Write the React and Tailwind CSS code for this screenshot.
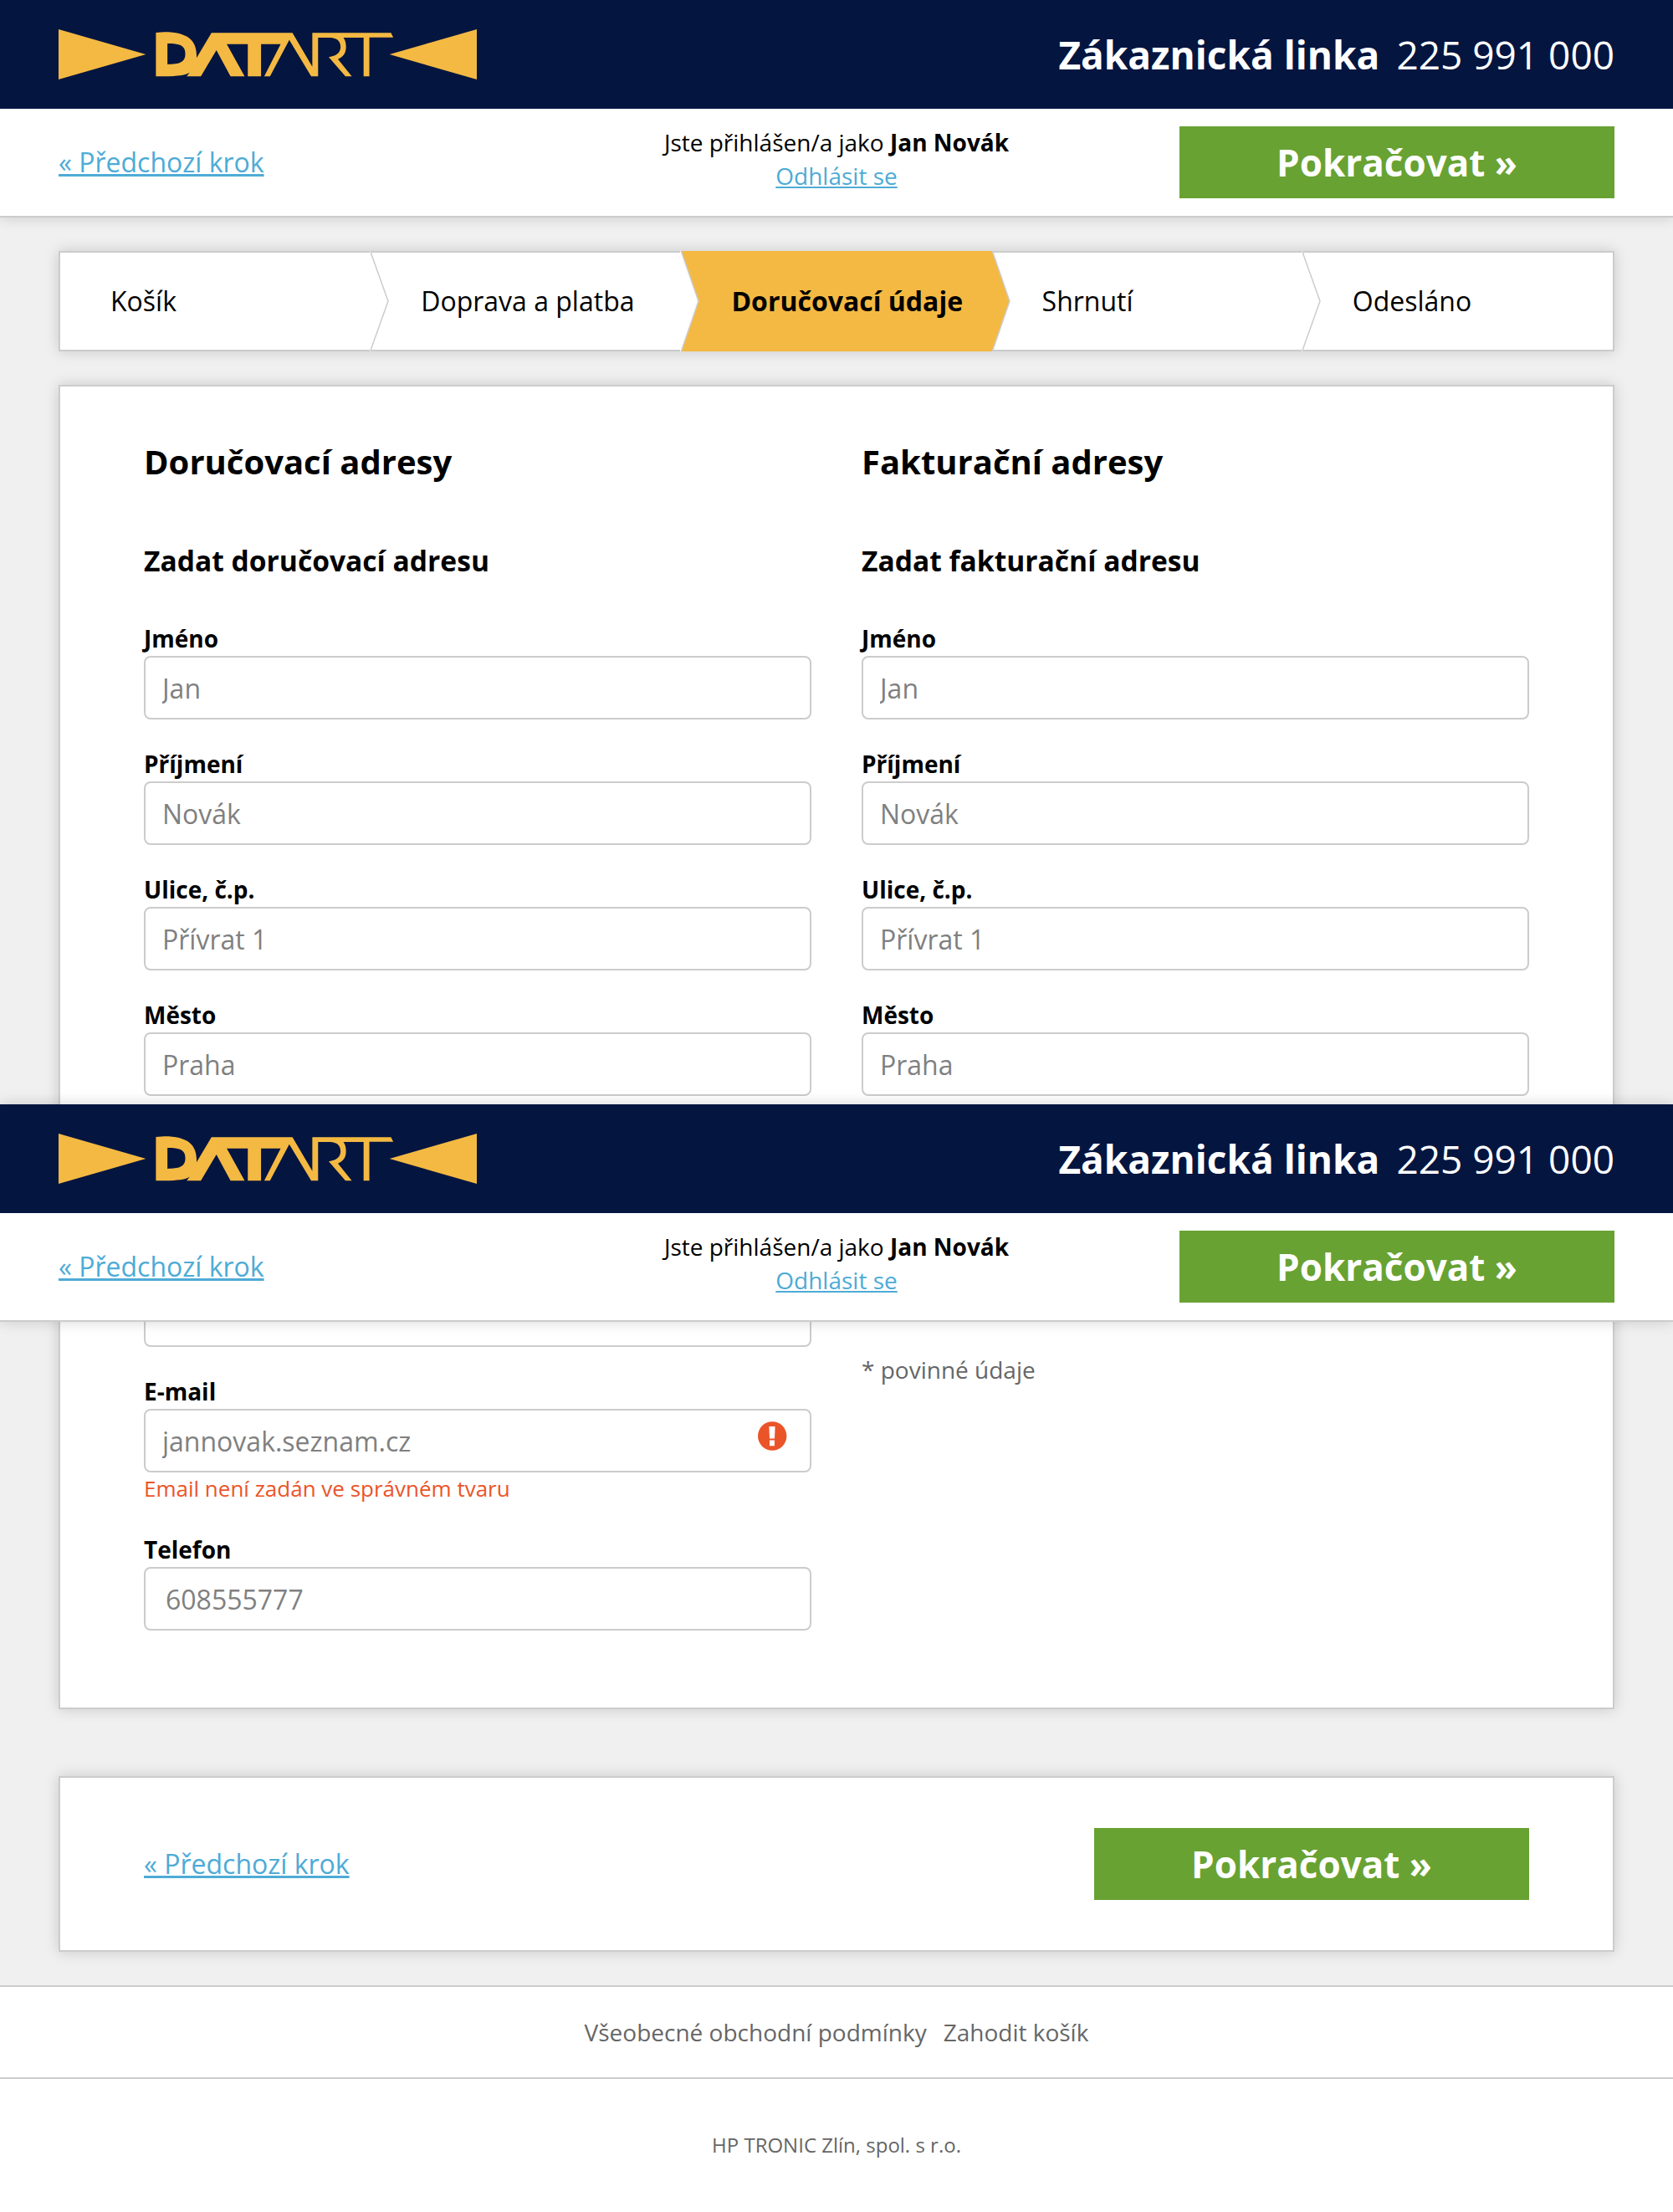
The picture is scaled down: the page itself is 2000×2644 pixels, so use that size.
function Logo() {
  return (
    <svg
      role="img"
      aria-label="Datart"
      className="h-[60px] w-[500px] fill-[#f4b942]"
      viewBox="58 75 1452 180"
      preserveAspectRatio="none"
    >
      <path d="M58 75 361 165 58 255Z" />
      <path d="M1510 75 1207 165 1510 255Z" />
      <path
        fillRule="evenodd"
        d="M396 87V244H430C470 242 495 241 513 230L503 244H552L606 150 655 244H704L642 128H715V244H761V128H829L772 244H792L859 113 935 244H959V105H1000C1025 106 1037 118 1037 138C1037 160 1022 170 996 175L1054 244H1076L1028 182C1047 174 1056 160 1056 138C1056 124 1053 114 1047 105H1117V244H1137V104H1220L1212 88H939V209L870 88H589L537 178C540 118 510 85 425 85ZM436 126V201C475 200 498 196 498 163C498 132 478 126 436 126Z"
      />
    </svg>
  );
}

function ContinueButton() {
  return (
    <button className="h-[86px] w-[520px] bg-[#68a232] text-[44px] font-bold text-white">
      Pokračovat »
    </button>
  );
}

function BackLink() {
  return (
    <a href="#" className="block w-fit pb-px text-[32px] leading-[43px] text-[#4eabd6] underline">
      « Předchozí krok
    </a>
  );
}

function Header() {
  return (
    <header className="relative z-10 bg-white shadow-[0_0_16px_rgba(0,0,0,0.17)]">
      <div className="flex h-[130px] items-center justify-between bg-[#041540] px-[70px]">
        <Logo />
        <div className="flex gap-[20px] text-[46px] leading-none text-white">
          <strong className="font-bold">Zákaznická linka</strong>
          <span>225 991 000</span>
        </div>
      </div>
      <div className="grid h-[130px] grid-cols-[520px_1fr_520px] items-center border-b-2 border-[#ccc] px-[70px]">
        <BackLink />
        <div className="-mt-2 text-center text-[28px] leading-[40px]">
          <p>
            Jste přihlášen/a jako <strong className="font-bold">Jan Novák</strong>
          </p>
          <a href="#" className="text-[#4eabd6] underline">
            Odhlásit se
          </a>
        </div>
        <ContinueButton />
      </div>
    </header>
  );
}

const steps = ["Košík", "Doprava a platba", "Doručovací údaje", "Shrnutí", "Odesláno"];
const activeStep = 2;

function Chevron({ index }) {
  const nextToActive = index === activeStep || index === activeStep + 1;
  const fill = index === activeStep + 1 ? "fill-[#f4b942]" : "fill-white";
  const top = nextToActive ? 0 : 2;
  const bottom = nextToActive ? 120 : 118;
  return (
    <svg className="absolute -left-px -top-[2px] h-[120px] w-[24px]" viewBox="-1 0 24 120">
      {index !== activeStep + 1 && (
        <path className="fill-white/60" d="M-1 0h1v2h-1zM-1 118h1v2h-1z" />
      )}
      <path className={fill} d={`M-1 ${top}H0L21 60 0 ${bottom}H-1Z`} />
      <path
        className="fill-none stroke-[#ccc] stroke-[1.5]"
        d={`M0.3 ${top}L21 60 0.3 ${bottom}`}
      />
    </svg>
  );
}

function Steps() {
  return (
    <ol className="mx-[70px] mt-[40px] flex h-[120px] border-2 border-[#ccc] bg-white text-[32px] leading-[43px] shadow-[0_0_16px_rgba(0,0,0,0.17)]">
      {steps.map((step, i) => (
        <li
          key={step}
          className={
            i === activeStep
              ? "relative -my-[2px] flex flex-1 items-center bg-[#f4b942] pb-px pl-[60px] font-bold"
              : "relative flex flex-1 items-center pb-px pl-[60px]"
          }
        >
          {i > 0 && (
            <span className={i === activeStep ? "absolute left-0 top-[2px]" : "absolute left-0 top-0"}>
              <Chevron index={i} />
            </span>
          )}
          {step}
        </li>
      ))}
    </ol>
  );
}

function ErrorIcon() {
  return (
    <svg className="absolute right-[29px] top-[15px] size-[35px]" viewBox="0 0 35 35">
      <circle cx="17.2" cy="17.5" r="17.2" className="fill-[#eb5428]" />
      <path className="fill-white" d="M13.4 6H20.6L20 20.6H14ZM14 22.6H19.9V29.3H14Z" />
    </svg>
  );
}

function Field({ label, value, error, wide }) {
  return (
    <div className="mb-[32px]">
      {label && (
        <label className="block h-[42px] text-[28px] font-bold leading-[42px]">{label}</label>
      )}
      <div className="relative h-[76px]">
        <input
          defaultValue={value}
          className={
            wide
              ? "h-full w-full rounded-[8px] border-2 border-[#ccc] bg-white px-[24px] text-[32px] text-[#808080]"
              : "h-full w-full rounded-[8px] border-2 border-[#ccc] bg-white px-[20px] text-[32px] text-[#808080]"
          }
        />
        {error && <ErrorIcon />}
      </div>
      {error && <p className="h-[39px] text-[26px] leading-[39px] text-[#eb5428]">{error}</p>}
    </div>
  );
}

function AddressForm({ title, subtitle }) {
  return (
    <div className="w-[798px]">
      <h2 className="text-[40px] font-bold leading-[60px]">{title}</h2>
      <h3 className="mb-[47px] mt-[63px] text-[33.6px] font-bold leading-[50px]">{subtitle}</h3>
      <Field label="Jméno" value="Jan" />
      <Field label="Příjmení" value="Novák" />
      <Field label="Ulice, č.p." value="Přívrat 1" />
      <Field label="Město" value="Praha" />
    </div>
  );
}

export default function App() {
  return (
    <div className="w-[2000px] bg-[#f0f0f0] font-['Open_Sans',sans-serif] text-black">
      <section className="h-[1320px] overflow-hidden">
        <Header />
        <Steps />
        <main className="mx-[70px] mt-[40px] flex h-[1000px] gap-[60px] border-2 border-[#ccc] bg-white px-[100px] pt-[60px] shadow-[0_0_16px_rgba(0,0,0,0.17)]">
          <AddressForm title="Doručovací adresy" subtitle="Zadat doručovací adresu" />
          <AddressForm title="Fakturační adresy" subtitle="Zadat fakturační adresu" />
        </main>
      </section>

      <section>
        <Header />
        <div className="h-[793px] overflow-hidden">
          <div className="mx-[70px] -mt-[48px] flex h-[511px] gap-[60px] border-2 border-[#ccc] bg-white px-[100px] shadow-[0_0_16px_rgba(0,0,0,0.17)]">
            <div className="w-[798px]">
              <Field />
              <Field
                label="E-mail"
                value="jannovak.seznam.cz"
                error="Email není zadán ve správném tvaru"
              />
              <Field label="Telefon" value="608555777" wide />
            </div>
            <p className="mt-[83px] text-[28px] leading-[40px] text-[#666]">* povinné údaje</p>
          </div>
          <div className="mx-[70px] mt-[80px] flex h-[210px] items-center justify-between border-2 border-[#ccc] bg-white px-[100px] shadow-[0_0_16px_rgba(0,0,0,0.17)]">
            <BackLink />
            <ContinueButton />
          </div>
        </div>
      </section>

      <footer className="border-t-2 border-[#ccc] bg-white text-[#666]">
        <nav className="flex h-[110px] items-center justify-center gap-[20px] border-b-2 border-[#ccc] text-[28px]">
          <a href="#">Všeobecné obchodní podmínky</a>
          <a href="#">Zahodit košík</a>
        </nav>
        <p className="flex h-[159px] items-center justify-center pb-[2px] text-[24px]">
          HP TRONIC Zlín, spol. s r.o.
        </p>
      </footer>
    </div>
  );
}
